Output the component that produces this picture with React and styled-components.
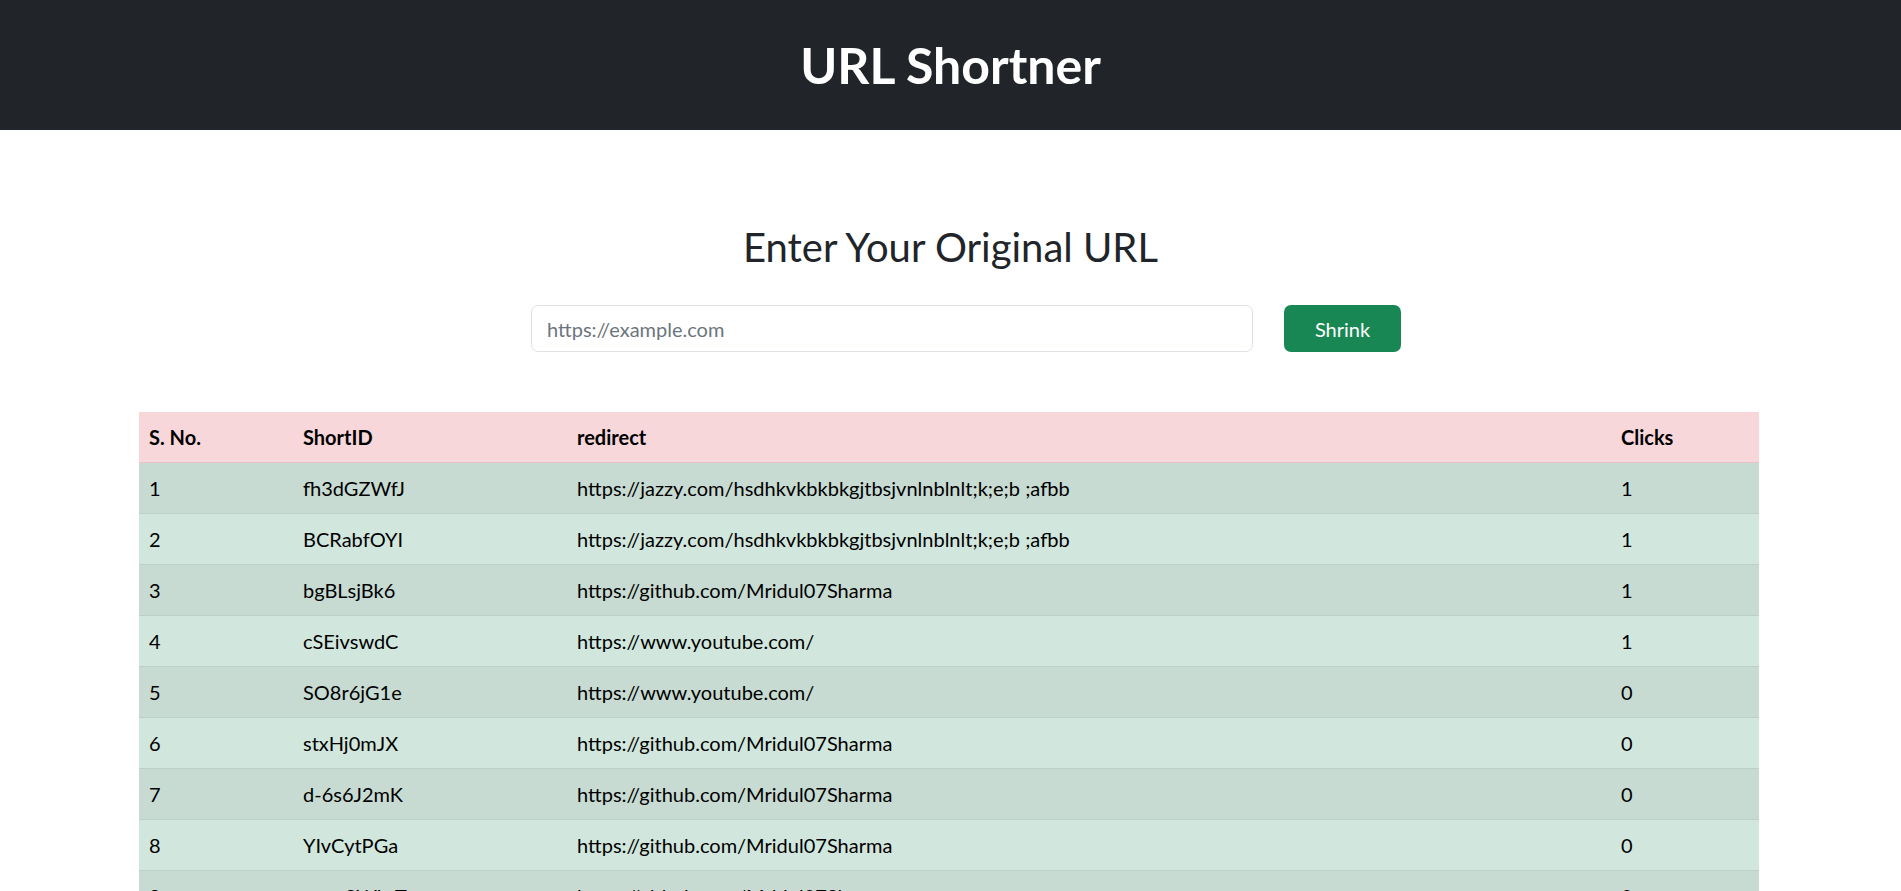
import React from 'react';
import styled, { createGlobalStyle } from 'styled-components';

const GlobalStyle = createGlobalStyle`
    html, body {
        margin: 0;
        padding: 0;
        overflow: hidden;
        background: #fff;
    }
    body {
        font-family: "Segoe UI", Lato, "Noto Sans", "Liberation Sans", sans-serif;
        color: #212529;
    }
    * {
        box-sizing: border-box;
    }
`

const TopBar = styled.header`
    height: 130px;
    background-color: #212529;
    display: flex;
    align-items: center;
    justify-content: center;
`

const Title = styled.h1`
    margin: 0;
    color: #fff;
    font-size: 50px;
    font-weight: 700;
    line-height: 1.2;
`

const MainContent = styled.main`
    padding-top: 93px;
`

const SubTitle = styled.h2`
    margin: 0;
    text-align: center;
    font-size: 40px;
    font-weight: 400;
    line-height: 48px;
    color: #212529;
`

const Form = styled.form`
    display: flex;
    gap: 31px;
    width: 901px;
    margin: 34px auto 0;
    padding-left: 31px;
`

const Input = styled.input`
    width: 722px;
    height: 47px;
    padding: 0 15px;
    border: 1px solid #dee2e6;
    border-radius: 7px;
    font-family: inherit;
    font-size: 20px;
    color: #212529;
    outline: none;

    &::placeholder {
        color: #6c757d;
    }
`

const Button = styled.button`
    width: 117px;
    height: 47px;
    border: none;
    border-radius: 7px;
    background-color: #198754;
    color: #fff;
    font-family: inherit;
    font-size: 20px;
    cursor: pointer;
`

const Table = styled.table`
    width: calc(100% - 281px);
    margin: 60px 142px 0 139px;
    border-collapse: collapse;
    table-layout: fixed;
    font-size: 20px;
    line-height: 30px;
    color: #000;
`

const HeadCell = styled.th`
    text-align: left;
    font-weight: 700;
    padding: 10px;
    background-color: #f8d7da;
    border-bottom: 1px solid #e6c3c6;
`

const Row = styled.tr`
    background-color: ${props => props.striped ? '#c7dbd2' : '#d1e7dd'};
`

const Cell = styled.td`
    padding: 10px;
    border-bottom: 1px solid #bcd0c7;
    white-space: nowrap;
    overflow: hidden;
`

const urls = [
    { shortId: 'fh3dGZWfJ', redirect: 'https://jazzy.com/hsdhkvkbkbkgjtbsjvnlnblnlt;k;e;b ;afbb', clicks: 1 },
    { shortId: 'BCRabfOYI', redirect: 'https://jazzy.com/hsdhkvkbkbkgjtbsjvnlnblnlt;k;e;b ;afbb', clicks: 1 },
    { shortId: 'bgBLsjBk6', redirect: 'https://github.com/Mridul07Sharma', clicks: 1 },
    { shortId: 'cSEivswdC', redirect: 'https://www.youtube.com/', clicks: 1 },
    { shortId: 'SO8r6jG1e', redirect: 'https://www.youtube.com/', clicks: 0 },
    { shortId: 'stxHj0mJX', redirect: 'https://github.com/Mridul07Sharma', clicks: 0 },
    { shortId: 'd-6s6J2mK', redirect: 'https://github.com/Mridul07Sharma', clicks: 0 },
    { shortId: 'YIvCytPGa', redirect: 'https://github.com/Mridul07Sharma', clicks: 0 },
    { shortId: 'vmwSWbzTa', redirect: 'https://github.com/Mridul07Sharma', clicks: 0 },
];

export default function App() {
    return (
        <>
            <GlobalStyle />
            <TopBar>
                <Title>URL Shortner</Title>
            </TopBar>
            <MainContent>
                <SubTitle>Enter Your Original URL</SubTitle>
                <Form onSubmit={e => e.preventDefault()}>
                    <Input type="text" placeholder="https://example.com" />
                    <Button type="submit">Shrink</Button>
                </Form>
                <Table>
                    <colgroup>
                        <col style={{ width: 154 }} />
                        <col style={{ width: 274 }} />
                        <col style={{ width: 1044 }} />
                        <col />
                    </colgroup>
                    <thead>
                        <tr>
                            <HeadCell>S. No.</HeadCell>
                            <HeadCell>ShortID</HeadCell>
                            <HeadCell>redirect</HeadCell>
                            <HeadCell>Clicks</HeadCell>
                        </tr>
                    </thead>
                    <tbody>
                        {urls.map((url, i) => (
                            <Row key={url.shortId} striped={i % 2 === 0}>
                                <Cell>{i + 1}</Cell>
                                <Cell>{url.shortId}</Cell>
                                <Cell>{url.redirect}</Cell>
                                <Cell>{url.clicks}</Cell>
                            </Row>
                        ))}
                    </tbody>
                </Table>
            </MainContent>
        </>
    );
}
